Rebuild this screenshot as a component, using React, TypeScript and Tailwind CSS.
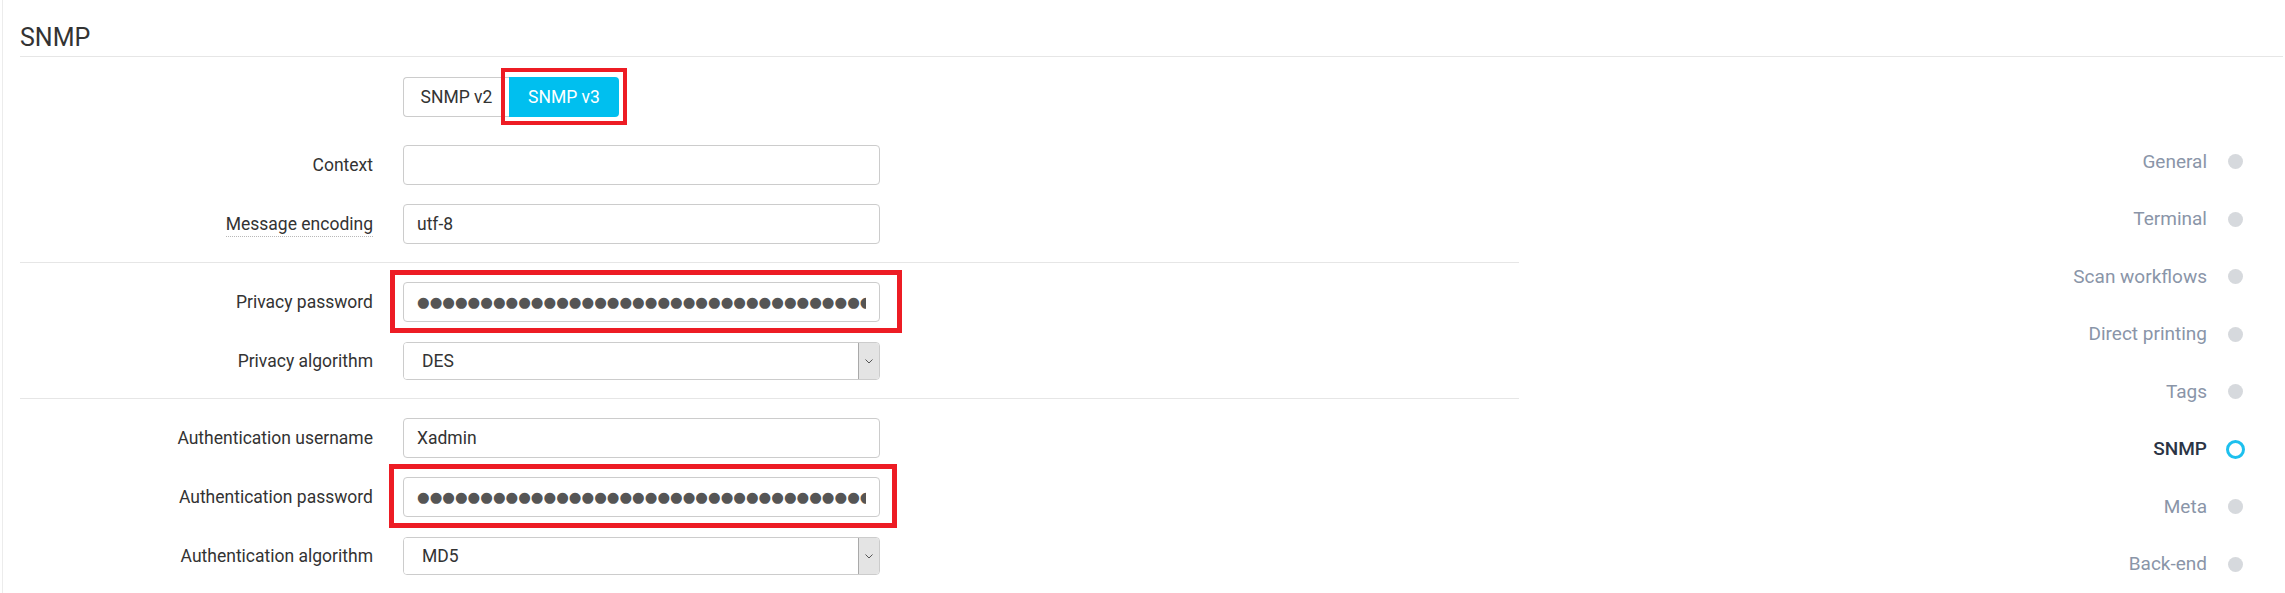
import React from "react";

const navItems = [
  "General",
  "Terminal",
  "Scan workflows",
  "Direct printing",
  "Tags",
  "SNMP",
  "Meta",
  "Back-end",
];

// masked secret, drawn as black circles like the browser's password mask
const masked = "\u25CF".repeat(70);

function Row({
  label,
  dotted,
  children,
}: {
  label: string;
  dotted?: boolean;
  children: React.ReactNode;
}) {
  return (
    <div className="flex h-[40px] items-center">
      <div className="w-[353px] text-right text-[17.5px] text-[#333]">
        <span className={dotted ? "border-b border-dotted border-[#b8b8b8] pb-[2px]" : ""}>
          {label}
        </span>
      </div>
      <div className="relative ml-[30px] flex h-full w-[477px] items-center">{children}</div>
    </div>
  );
}

function TextInput({ value }: { value?: string }) {
  return (
    <input
      type="text"
      defaultValue={value}
      readOnly
      className="h-[40px] w-full rounded-[4px] border border-[#ccc] bg-white px-[13px] text-[17.5px] text-[#333] outline-none"
    />
  );
}

function PasswordInput() {
  return (
    <input
      type="text"
      defaultValue={masked}
      readOnly
      aria-label="password"
      className="h-[40px] w-full rounded-[4px] border border-[#ccc] bg-white px-[13px] font-['DejaVu_Sans',sans-serif] text-[14.5px] text-[#555] outline-none"
    />
  );
}

function Select({ value }: { value: string }) {
  return (
    <div className="flex h-[38px] w-full overflow-hidden rounded-[4px] border border-[#ccc] bg-white">
      <select
        defaultValue={value}
        className="flex-1 appearance-none bg-white pl-[18px] text-[17.5px] text-[#333] outline-none"
      >
        <option>{value}</option>
      </select>
      <div className="flex w-[21px] items-center justify-center border-l border-[#a9a9a9] bg-[#e4e4e4]">
        <svg width="8" height="5" viewBox="0 0 8 5" fill="none">
          <path d="M0.5 0.5 L4 4 L7.5 0.5" stroke="#555" strokeWidth="1" />
        </svg>
      </div>
    </div>
  );
}

function Highlight({ className }: { className: string }) {
  return <span className={`pointer-events-none absolute border-[#ed1c24] ${className}`} />;
}

export default function App() {
  return (
    <div className="min-h-screen bg-white font-[Roboto,sans-serif]">
      <div className="ml-[2px] border-l border-[#ececec]">
        {/* Header */}
        <div className="ml-[17px] mr-[2px] border-b border-[#e6e6e6] pb-[4px] pt-[23px] text-[25px] leading-[29px] text-[#333]">
          SNMP
        </div>

        <div className="flex">
          {/* Form */}
          <div className="ml-[17px] w-[1499px] pt-[20px]">
            <div className="flex h-[40px] items-center">
              <div className="w-[353px]" />
              <div className="ml-[30px] flex text-[17.5px]">
                <button className="h-[40px] w-[106px] rounded-l-[4px] border border-r-0 border-[#ccc] bg-white text-[#333]">
                  SNMP v2
                </button>
                <div className="relative">
                  <button className="h-[40px] w-[110px] rounded-r-[4px] bg-[#00bfef] text-white">
                    SNMP v3
                  </button>
                  <Highlight className="-bottom-[8px] -left-[8px] -right-[8px] -top-[9px] border-[4px]" />
                </div>
              </div>
            </div>

            <div className="mt-[28px] flex flex-col gap-[19px]">
              <Row label="Context">
                <TextInput />
              </Row>
              <Row label="Message encoding" dotted>
                <TextInput value="utf-8" />
              </Row>
            </div>

            <div className="mt-[18px] border-t border-[#e6e6e6]" />

            <div className="mt-[19px] flex flex-col gap-[19px]">
              <Row label="Privacy password">
                <PasswordInput />
                <Highlight className="-bottom-[11px] -left-[13px] -right-[22px] -top-[12px] border-[5px]" />
              </Row>
              <Row label="Privacy algorithm">
                <Select value="DES" />
              </Row>
            </div>

            <div className="mt-[17px] border-t border-[#e6e6e6]" />

            <div className="mt-[19px] flex flex-col gap-[19px]">
              <Row label="Authentication username">
                <TextInput value="Xadmin" />
              </Row>
              <Row label="Authentication password">
                <PasswordInput />
                <Highlight className="-bottom-[11px] -left-[14px] -right-[17px] -top-[13px] border-[5px]" />
              </Row>
              <Row label="Authentication algorithm">
                <Select value="MD5" />
              </Row>
            </div>
          </div>

          {/* Side navigation */}
          <nav className="flex-1 pr-[40px] pt-[76px]">
            {navItems.map((item) => {
              const active = item === "SNMP";
              return (
                <div key={item} className="flex h-[57.5px] items-center justify-end gap-[19px]">
                  <span
                    className={
                      active
                        ? "text-[19px] font-medium text-[#2b3445]"
                        : "text-[19px] text-[#8a95a8]"
                    }
                  >
                    {item}
                  </span>
                  <div className="flex w-[19px] justify-center">
                    {active ? (
                      <span className="h-[19px] w-[19px] rounded-full border-[3px] border-[#1dc0ee]" />
                    ) : (
                      <span className="h-[15px] w-[15px] rounded-full bg-[#d6d9dd]" />
                    )}
                  </div>
                </div>
              );
            })}
          </nav>
        </div>
      </div>
    </div>
  );
}
